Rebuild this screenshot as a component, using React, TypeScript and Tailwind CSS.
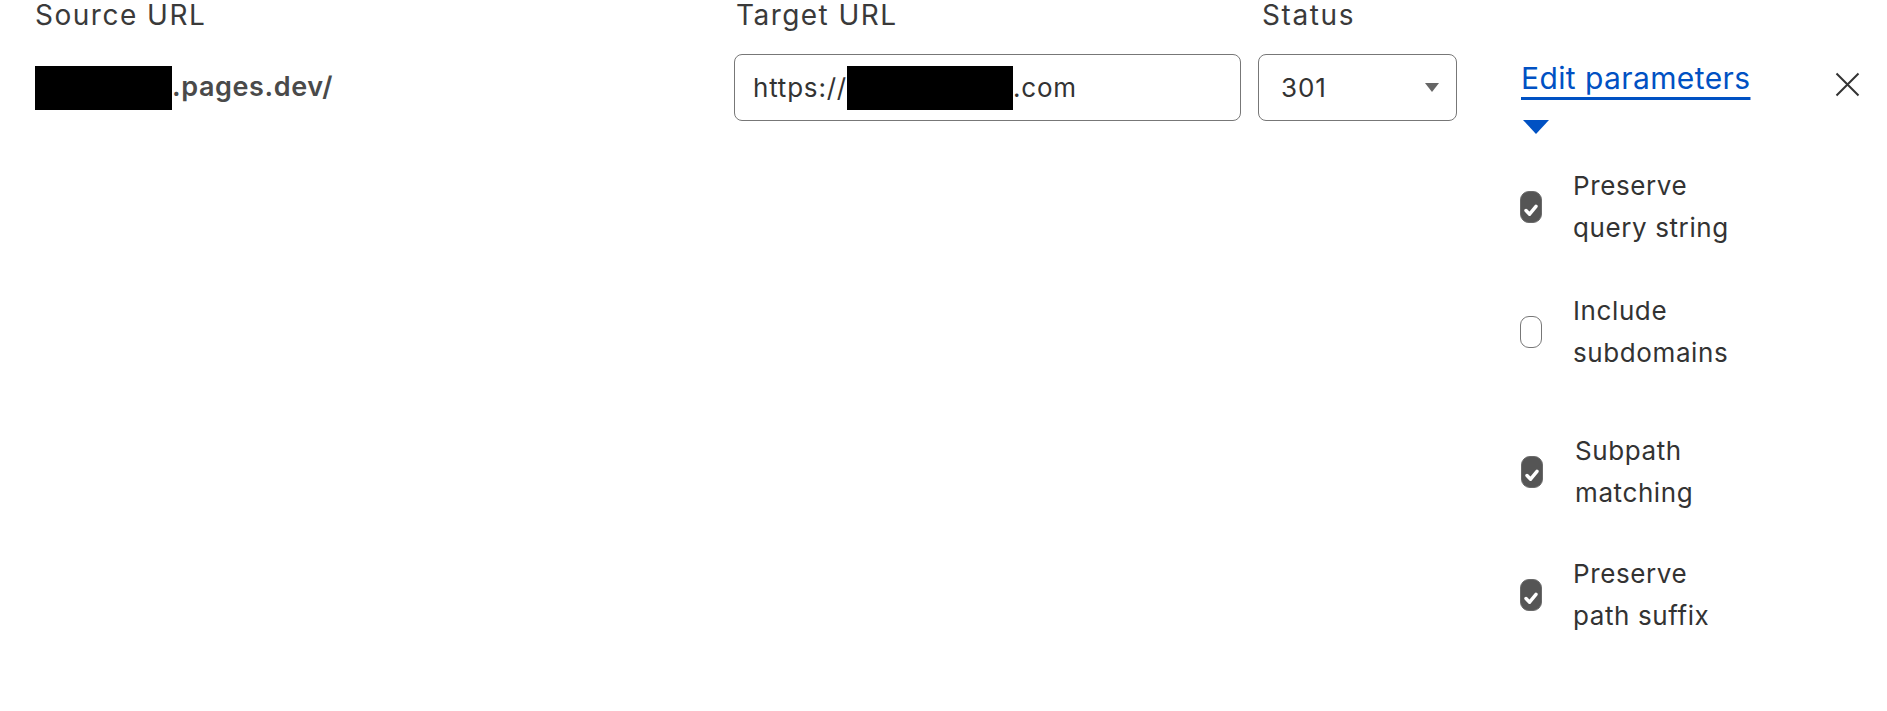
import React from "react";

function Check({ checked }: { checked: boolean }) {
  if (!checked) {
    return (
      <div className="w-[22px] h-[32px] shrink-0 rounded-[9px] border-[1.5px] border-[#777] bg-white" />
    );
  }
  return (
    <div className="w-[22px] h-[32px] shrink-0 rounded-[9px] border-[1.5px] border-[#6a6a6a] bg-[#555] flex items-end justify-center pb-[5px]">
      <svg width="14" height="13" viewBox="0 0 14 13">
        <polyline points="2,6.5 5.6,10.2 12,2.4" fill="none" stroke="#fff" strokeWidth="3.4" strokeLinecap="round" strokeLinejoin="round" />
      </svg>
    </div>
  );
}

function Param({ checked, l1, l2, cls }: { checked: boolean; l1: string; l2: string; cls: string }) {
  return (
    <div className={"flex items-center " + cls}>
      <Check checked={checked} />
      <div className="text-[26px] leading-[42px] tracking-[0.6px] text-[#333]">
        <div>{l1}</div>
        <div>{l2}</div>
      </div>
    </div>
  );
}

export default function App() {
  return (
    <div className="w-[1887px] h-[711px] bg-white text-[#333] font-[Inter,sans-serif] flex pl-[35px]">
      <div className="w-[699px] shrink-0">
        <div className="text-[28px] leading-[30px] tracking-[1.5px] text-[#3a3a3a]">Source URL</div>
        <div className="mt-[24px] h-[67px] flex items-center">
          <span className="w-[137px] h-[44px] bg-black" />
          <span className="text-[27px] font-semibold tracking-[0.6px] text-[#4a4a4a]">.pages.dev/</span>
        </div>
      </div>
      <div className="w-[507px] shrink-0">
        <div className="text-[28px] leading-[30px] tracking-[1.45px] pl-[2px] text-[#3a3a3a]">Target URL</div>
        <div className="mt-[24px] h-[67px] rounded-[8px] border-[1.5px] border-[#777] flex items-center pl-[18px] text-[26px] tracking-[0.8px] text-[#333]">
          <span>https://</span>
          <span className="w-[166px] h-[44px] bg-black" />
          <span>.com</span>
        </div>
      </div>
      <div className="w-[199px] ml-[17px] shrink-0">
        <div className="text-[28px] leading-[30px] tracking-[1.6px] pl-[4px] text-[#3a3a3a]">Status</div>
        <div className="mt-[24px] h-[67px] rounded-[8px] border-[1.5px] border-[#777] flex items-center justify-between pl-[22px] pr-[17px] text-[26px] tracking-[0.9px] text-[#333]">
          <span>301</span>
          <svg width="14" height="9" viewBox="0 0 14 9">
            <polygon points="0,0 14,0 7,9" fill="#666" />
          </svg>
        </div>
      </div>
      <div className="w-[314px] ml-[64px] shrink-0 pt-[54px]">
        <div className="text-[30px] leading-[48px] tracking-[0.4px] text-[#0051c3] underline decoration-[2.5px] underline-offset-[8px] w-fit">
          Edit parameters
        </div>
        <div className="mt-[18px] pl-[2px]">
          <svg width="26" height="14" viewBox="0 0 26 14">
            <polygon points="0,0 26,0 13,14" fill="#0051c3" />
          </svg>
        </div>
        <div className="mt-[31px] -ml-[1px]">
          <Param checked={true} l1="Preserve" l2="query string" cls="gap-[31px]" />
          <Param checked={false} l1="Include" l2="subdomains" cls="gap-[31px] mt-[41px]" />
          <Param checked={true} l1="Subpath" l2="matching" cls="gap-[32px] mt-[56px] ml-[1px]" />
          <Param checked={true} l1="Preserve" l2="path suffix" cls="gap-[31px] mt-[39px]" />
        </div>
      </div>
      <div className="pt-[72px]">
        <svg width="25" height="25" viewBox="0 0 25 25">
          <path d="M1.5 1.5 L23.5 23.5 M23.5 1.5 L1.5 23.5" stroke="#333" strokeWidth="2" fill="none" />
        </svg>
      </div>
    </div>
  );
}
